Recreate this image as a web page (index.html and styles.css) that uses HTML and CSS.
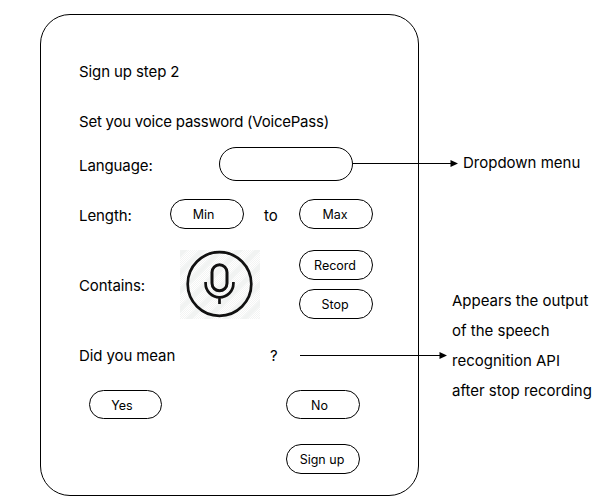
FILE: index.html
```html
<!DOCTYPE html>
<html lang="en">
<head>
<meta charset="utf-8">
<title>Sign up step 2</title>
<link rel="stylesheet" href="styles.css">
</head>
<body>
<div class="board">
  <main class="card">
    <h1 class="title">Sign up step 2</h1>
    <p class="subtitle">Set you voice password (VoicePass)</p>
    <div class="row language">
      <span class="label w-language">Language:</span>
      <div class="dropdown"></div>
    </div>
    <div class="row length">
      <span class="label w-length">Length:</span>
      <button class="pill">Min</button>
      <span class="to">to</span>
      <button class="pill">Max</button>
    </div>
    <div class="row contains">
      <span class="label w-contains">Contains:</span>
      <div class="mic">
        <svg width="80" height="69" viewBox="0 0 80 69" fill="none" stroke="#111">
          <defs>
            <pattern id="grain" width="2" height="2" patternUnits="userSpaceOnUse">
              <path d="M0 .5H1M1 1.5H2" stroke="#f3f4f3" stroke-width="1"/>
            </pattern>
            <pattern id="stripes" width="13" height="13" patternUnits="userSpaceOnUse" patternTransform="rotate(45)">
              <path d="M3 0V13" stroke="#f1f3f2" stroke-width="5"/>
            </pattern>
          </defs>
          <path d="M0 0H80V69H0Z" fill="url(#grain)" stroke="none"/>
          <path d="M0 0H80V69H0Z" fill="url(#stripes)" stroke="none"/>
          <circle cx="39.5" cy="34" r="31.8" stroke-width="2.7"/>
          <rect x="32" y="14.8" width="15" height="26" rx="7.5" stroke-width="3"/>
          <path d="M25.6 32V33.5A13.9 13.9 0 0 0 53.4 33.5V32M39.5 47V54" stroke-width="2.7"/>
        </svg>
      </div>
      <div class="stack">
        <button class="pill">Record</button>
        <button class="pill">Stop</button>
      </div>
    </div>
    <div class="row mean">
      <span class="label w-mean">Did you mean</span>
      <span class="label">?</span>
    </div>
    <div class="row answers">
      <button class="pill yes">Yes</button>
      <button class="pill no">No</button>
    </div>
    <div class="row submit">
      <button class="pill signup">Sign up</button>
    </div>
  </main>
  <aside class="notes">
    <p class="note-menu">Dropdown menu</p>
    <p class="note-output">Appears the output<br>of the speech<br>recognition API<br>after stop recording</p>
  </aside>
  <svg class="arrow arrow-menu" width="105" height="8" viewBox="0 0 105 8"><path d="M0 4.5H99" stroke="#000"/><path d="M97.5 1V8L105 4.5Z"/></svg>
  <svg class="arrow arrow-output" width="147" height="8" viewBox="0 0 147 8"><path d="M0 4.5H141" stroke="#000"/><path d="M139.5 1V8L147 4.5Z"/></svg>
</div>
</body>
</html>
```
FILE: styles.css
```css
* { box-sizing: border-box; }
body {
  margin: 0;
  background: #fff;
  color: #000;
  font: 400 15px/20px Inter, "Liberation Sans", sans-serif;
}
.board {
  position: relative;
  display: flex;
  width: 600px;
  height: 503px;
  padding: 14px 0 0 40px;
  overflow: hidden;
}
.card {
  flex: none;
  width: 379px;
  height: 482px;
  padding: 47px 0 0 38px;
  border: 1px solid #000;
  border-radius: 30px;
}
.title, .subtitle, .notes p { margin: 0; font: inherit; white-space: nowrap; }
.title { letter-spacing: -0.1px; }
.subtitle { margin-top: 30px; letter-spacing: -0.23px; }
.row { display: flex; width: 294px; }
.label { flex: none; letter-spacing: -0.1px; white-space: nowrap; }
.language { margin-top: 15px; }
.language .label { padding-top: 9px; }
.w-language { width: 140px; }
.dropdown { width: 134px; height: 34px; border: 1px solid #000; border-radius: 17px; }
.length { margin-top: 18px; }
.length .label, .to { padding-top: 7px; }
.w-length { width: 91px; }
.to { width: 55px; padding-left: 20px; }
.pill {
  flex: none;
  width: 74px;
  height: 30px;
  padding: 2px 7px 0 0;
  border: 1px solid #000;
  border-radius: 15px;
  background: transparent;
  color: #000;
  font: 400 12.5px/26px Inter, "Liberation Sans", sans-serif;
  white-space: nowrap;
}
.stack .pill, .length .pill:last-child, .signup { padding-right: 2px; }
.contains { margin-top: 20px; }
.w-contains { width: 101px; padding-top: 27px; }
.mic { width: 119px; height: 69px; padding-top: 1px; }
.mic svg { display: block; }
.stack { display: flex; flex-direction: column; gap: 9px; margin-top: 1px; }
.mean { margin-top: 27px; }
.w-mean { width: 191px; }
.answers { margin-top: 24px; padding-left: 10px; }
.answers .pill { width: 73px; height: 29px; line-height: 25px; }
.answers .no { width: 74px; margin-left: 124px; }
.submit { margin-top: 25px; padding-left: 207px; }
.notes { flex: none; width: 170px; padding: 139px 0 0 33px; }
.notes .note-menu { margin-left: 11px; }
.notes .note-output { margin-top: 113px; line-height: 30px; }
.arrow { position: absolute; }
.arrow-menu { left: 353px; top: 159px; }
.arrow-output { left: 300px; top: 351px; }
```
